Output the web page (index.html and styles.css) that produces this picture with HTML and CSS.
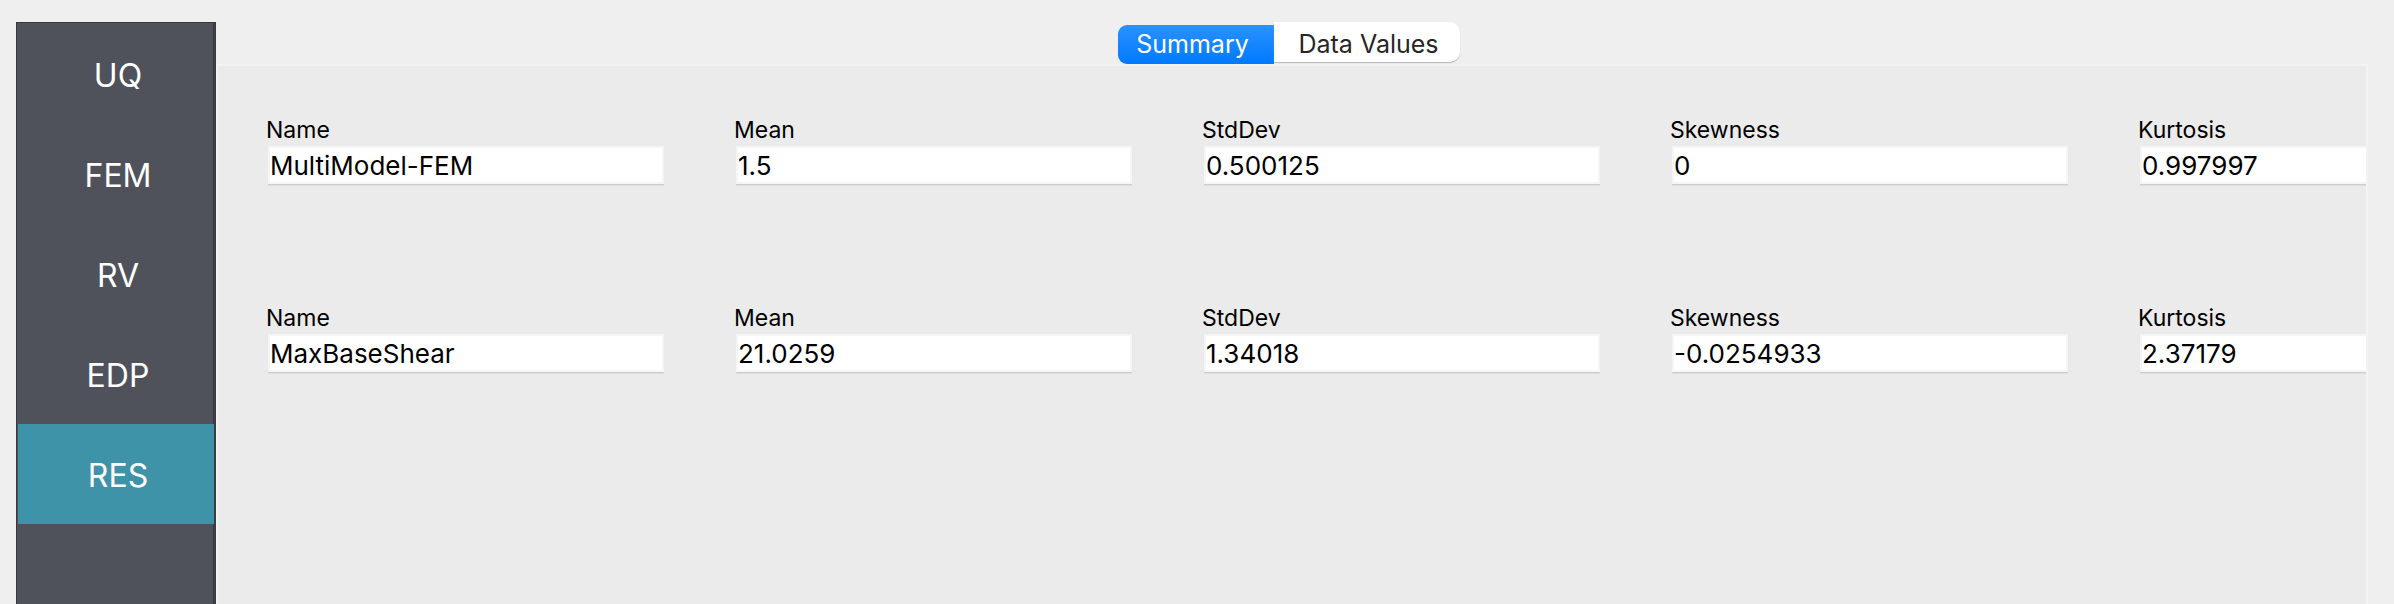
FILE: index.html
```
<!DOCTYPE html>
<html lang="en">
<head>
<meta charset="utf-8">
<title>Results</title>
<link rel="stylesheet" href="styles.css">
</head>
<body>
<div class="app">
  <nav class="sidebar" aria-label="Sections">
    <button class="nav-item" type="button">UQ</button>
    <button class="nav-item" type="button">FEM</button>
    <button class="nav-item" type="button">RV</button>
    <button class="nav-item" type="button">EDP</button>
    <button class="nav-item nav-item-active" type="button" aria-current="page">RES</button>
  </nav>
  <main class="content">
    <div class="tabs" role="tablist">
      <button class="tab tab-active" type="button" role="tab" aria-selected="true">Summary</button>
      <button class="tab tab-idle" type="button" role="tab" aria-selected="false">Data Values</button>
    </div>
    <section class="panel" role="tabpanel">
      <div class="row">
        <label class="field">Name<input class="value" type="text" value="MultiModel-FEM"></label>
        <label class="field">Mean<input class="value" type="text" value="1.5"></label>
        <label class="field">StdDev<input class="value" type="text" value="0.500125"></label>
        <label class="field">Skewness<input class="value" type="text" value="0"></label>
        <label class="field">Kurtosis<input class="value" type="text" value="0.997997"></label>
      </div>
      <div class="row">
        <label class="field">Name<input class="value" type="text" value="MaxBaseShear"></label>
        <label class="field">Mean<input class="value" type="text" value="21.0259"></label>
        <label class="field">StdDev<input class="value" type="text" value="1.34018"></label>
        <label class="field">Skewness<input class="value" type="text" value="-0.0254933"></label>
        <label class="field">Kurtosis<input class="value" type="text" value="2.37179"></label>
      </div>
    </section>
  </main>
</div>
</body>
</html>
```
FILE: styles.css
```
* {
  box-sizing: border-box;
}

body {
  margin: 0;
  background: #efefef;
  color: #000;
  font-family: Inter, "Liberation Sans", sans-serif;
}

button,
input {
  font-family: inherit;
}

.app {
  display: flex;
  height: 100vh;
  padding: 22px 26px 0 16px;
}

.sidebar {
  display: flex;
  flex-direction: column;
  flex: none;
  width: 200px;
  padding-top: 1px;
  background: #4f525a;
  border: 1px solid #37393e;
  border-right: 3px solid #3b3d42;
  border-bottom: 0;
}

.nav-item {
  height: 100px;
  margin: 0 -1px 0 1px;
  padding: 2px 0 0 4px;
  border: 0;
  background: transparent;
  color: #fff;
  font-size: 32px;
}

.nav-item-active {
  background: #3f93a8;
}

.content {
  display: flex;
  flex-direction: column;
  flex: 1;
  min-width: 0;
}

.tabs {
  display: flex;
  justify-content: center;
  height: 42px;
  padding-right: 6px;
}

.tab {
  border: 0;
  font-size: 25px;
  line-height: 40px;
}

.tab-active {
  width: 156px;
  height: 39px;
  margin-top: 3px;
  padding: 0 7px 2px 0;
  border-radius: 9px 0 0 9px;
  background: linear-gradient(#2b91ff, #007aff);
  color: #fff;
  line-height: 36px;
}

.tab-idle {
  width: 186px;
  height: 40px;
  padding: 2px 0 0 3px;
  border-radius: 0 10px 10px 0;
  background: #fff;
  box-shadow: 0 1px 1px #b5b5b5;
  color: #262626;
}

.panel {
  display: flex;
  flex-direction: column;
  flex: 1;
  gap: 119px;
  overflow: hidden;
  padding: 49px 0 0 48px;
  border: 2px solid #f3f3f3;
  border-bottom: 0;
  background: #ebebeb;
}

.row {
  display: flex;
  gap: 70px;
}

.field {
  display: flex;
  flex-direction: column;
  flex: none;
  width: 398px;
  font-size: 23px;
  line-height: 31px;
}

.value {
  height: 38px;
  margin-left: 2px;
  padding: 0;
  border: 2px solid #f5f5f5;
  border-radius: 0;
  background: #fff;
  box-shadow: 0 1px 0 #cdcdcd, 0 2px 0 #dedede;
  color: #000;
  font-size: 26px;
}
```
